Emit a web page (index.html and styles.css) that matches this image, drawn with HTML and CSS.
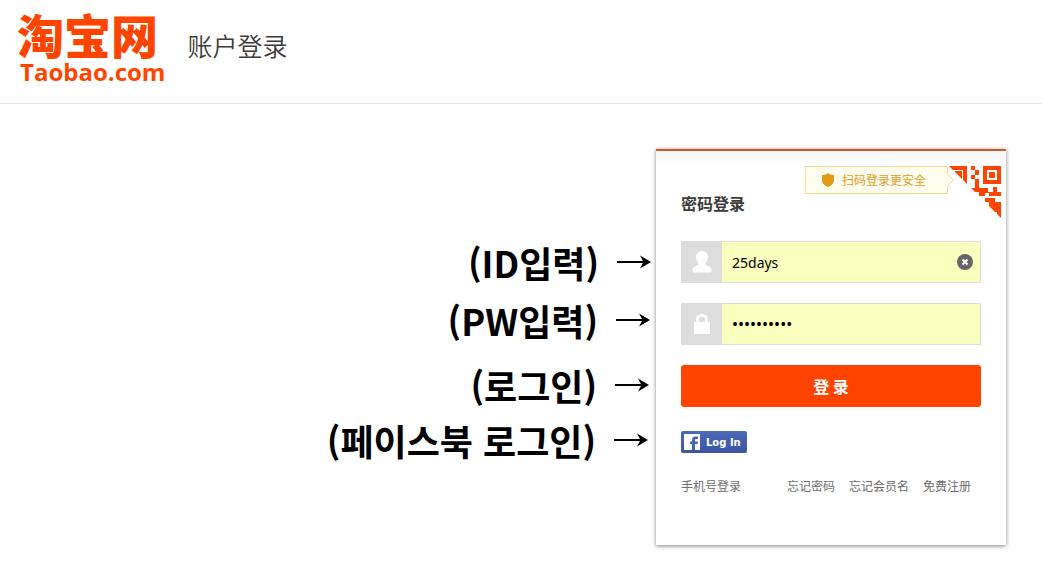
FILE: index.html
```html
<!DOCTYPE html>
<html lang="zh-CN">
<head>
<meta charset="utf-8">
<title>淘宝网 - 账户登录</title>
<link rel="stylesheet" href="styles.css">
</head>
<body>
<header class="header">
  <a class="logo" href="#">
    <span class="logo-name">淘宝网</span>
    <span class="logo-domain">Taobao.com</span>
  </a>
  <h1 class="page-title">账户登录</h1>
</header>
<main class="main">
  <ul class="notes" lang="ko">
    <li class="note note-id">(ID입력) <svg class="arrow" viewBox="0 0 34 14" aria-hidden="true"><path d="M0 6h26L23 0.500 34 7 23 13.500 26 8H0z"/></svg></li>
    <li class="note note-pw">(PW입력) <svg class="arrow" viewBox="0 0 34 14" aria-hidden="true"><path d="M0 6h26L23 0.500 34 7 23 13.500 26 8H0z"/></svg></li>
    <li class="note note-login">(로그인) <svg class="arrow" viewBox="0 0 34 14" aria-hidden="true"><path d="M0 6h26L23 0.500 34 7 23 13.500 26 8H0z"/></svg></li>
    <li class="note note-facebook">(페이스북 로그인) <svg class="arrow" viewBox="0 0 34 14" aria-hidden="true"><path d="M0 6h26L23 0.500 34 7 23 13.500 26 8H0z"/></svg></li>
  </ul>
  <form class="card">
    <a class="scan" href="#">
      <span class="scan-tip">
        <svg class="shield" viewBox="0 0 12 14" aria-hidden="true"><path d="M6 0C4.500 1.400 2.500 2 0 2v5c0 3.500 3 5.800 6 7 3-1.200 6-3.500 6-7V2C9.500 2 7.500 1.400 6 0z"/></svg>
        扫码登录更安全
        <svg class="tip-point" viewBox="0 0 7 14" aria-hidden="true"><path class="tip-fill" d="M0 0l6 7-6 7z"/><path class="tip-line" d="M0 0l6 7-6 7"/></svg>
      </span>
      <svg class="qr" viewBox="0 0 52 52" aria-hidden="true">
        <defs><clipPath id="corner"><path d="M0 0H52V52z"/></clipPath></defs>
        <g clip-path="url(#corner)" shape-rendering="crispEdges">
          <path d="M0 0h18v18h-4V4H0zM6 5h7v8H6z"/>
          <path d="M22 0h4v4h4v5h-4v4h4v5h-4v-5h-4V9h4V4h-4z"/>
          <path fill-rule="evenodd" d="M34 0h18v18H34zM38 4v10h10V4zM40 6h6v6h-6z"/>
          <path d="M26 16h4v6h9v4h5v-5h4v5h4v4H40v-3h-4v3h-6v-4h-8v-4h4z"/>
          <path d="M36 32h10v4h6v13h-3v3h3v-3h-4v-3h-8V36h-4z"/>
        </g>
      </svg>
    </a>
    <h2 class="card-title">密码登录</h2>
    <div class="field">
      <label class="field-icon" for="user" aria-label="会员名">
        <svg class="icon" viewBox="0 0 20 22" aria-hidden="true"><path d="M10 0c4 0 6 2.500 6 6 0 2.500-1 4.500-2.500 6v2c2 .8 6 1.500 6 5v1c0 1-.5 1.500-1.500 1.500H2c-1 0-1.500-.5-1.500-1.500v-1c0-3.500 4-4.200 6-5v-2C5 10.500 4 8.500 4 6c0-3.500 2-6 6-6z"/></svg>
      </label>
      <input class="input" id="user" type="text" value="25days">
      <button class="clear" type="button" aria-label="清除">
        <svg viewBox="0 0 16 16" aria-hidden="true"><circle cx="8" cy="8" r="8"/><path d="M5.500 5.500l5 5M10.500 5.500l-5 5"/></svg>
      </button>
    </div>
    <div class="field">
      <label class="field-icon" for="pass" aria-label="密码">
        <svg class="icon" viewBox="0 0 20 22" aria-hidden="true"><path fill-rule="evenodd" d="M2 9h2V7c0-4 2.500-6 6-6s6 2 6 6v2h2v12H2zM7 9h6V7c0-2-1-3.200-3-3.200S7 5 7 7z"/></svg>
      </label>
      <input class="input input-pass" id="pass" type="password" value="abcdefghij">
    </div>
    <button class="submit" type="submit">登 录</button>
    <button class="facebook" type="button">
      <svg class="fb-icon" viewBox="0 0 16 16" aria-hidden="true"><path class="fb-bg" d="M0 0h16v16H0z"/><path class="fb-f" d="M8 16v-6H6V7.500h2V6c0-2.300 1.300-3.500 3.300-3.500H14V5h-1.700C11.300 5 11 5.500 11 6.300v1.200h3l-.4 2.500H11v6z"/></svg>
      Log In
    </button>
    <nav class="links">
      <a class="link link-phone" href="#">手机号登录</a>
      <a class="link" href="#">忘记密码</a>
      <a class="link" href="#">忘记会员名</a>
      <a class="link" href="#">免费注册</a>
    </nav>
  </form>
</main>
</body>
</html>
```
FILE: styles.css
```css
* { box-sizing: border-box; }

body {
  margin: 0;
  background: #fff;
  color: #3c3c3c;
  font: 12px/18px "Noto Sans CJK SC", sans-serif;
}

a { color: inherit; text-decoration: none; }

.header {
  display: flex;
  gap: 22px;
  padding: 10px 17px 17px;
  border-bottom: 1px solid #e5e5e5;
}

.logo {
  display: flex;
  flex-direction: column;
  color: #ff4400;
  font-weight: 900;
}

.logo-name { font-size: 47px; line-height: 48px; }

.logo-domain {
  padding-left: 3px;
  font: bold 24px/28px "Open Sans", sans-serif;
}

.page-title {
  margin: 20px 0 0;
  font-size: 25px;
  font-weight: 350;
  line-height: 30px;
}

.main {
  display: flex;
  justify-content: flex-end;
  gap: 5px;
  padding: 45px 36px 36px 16px;
}

.notes {
  margin: 0;
  padding: 93px 0 0;
  list-style: none;
  color: #000;
}

.note {
  display: flex;
  align-items: center;
  justify-content: flex-end;
  gap: 18px;
  height: 40px;
  font: bold 36px/38px "Noto Sans CJK KR", sans-serif;
  white-space: nowrap;
}

.note-pw { margin: 18px 1px 0 0; }
.note-login { margin: 25px 2px 0 0; }
.note-facebook { margin: 15px 3px 0 0; }
.arrow { width: 34px; height: 14px; }

.card {
  position: relative;
  display: flex;
  flex-direction: column;
  align-items: flex-start;
  width: 350px;
  padding: 40px 25px 50px;
  border-top: 2px solid #c9562e;
  background: linear-gradient(#f9f9f9 9px, #fff 10px);
  box-shadow: 0 1px 4px rgba(0, 0, 0, 0.5);
}

.scan {
  position: absolute;
  top: 15px;
  right: 5px;
  display: flex;
  gap: 1px;
}

.scan-tip {
  position: relative;
  display: flex;
  align-items: center;
  gap: 8px;
  width: 143px;
  height: 28px;
  padding-left: 16px;
  border: 1px solid #f3d995;
  background: #fffdee;
  color: #df9c1f;
}

.shield { width: 12px; height: 14px; fill: #e39a16; }

.tip-point {
  position: absolute;
  top: 6px;
  right: -7px;
  width: 7px;
  height: 14px;
}

.tip-fill { fill: #fffdee; }
.tip-line { fill: none; stroke: #f3d995; }
.qr { width: 52px; height: 52px; fill: #ff4400; }

.card-title {
  margin: 0 0 26px;
  font-size: 16px;
  line-height: 24px;
}

.field {
  position: relative;
  display: flex;
  width: 100%;
  height: 42px;
  margin-bottom: 20px;
  border: 1px solid #ddd;
}

.field-icon {
  display: flex;
  align-items: center;
  justify-content: center;
  width: 40px;
  background: #ddd;
}

.icon { width: 20px; height: 22px; fill: #fff; }

.input {
  flex: 1;
  min-width: 0;
  padding: 0 40px 0 10px;
  border: 0;
  outline: 0;
  background: #faffbd;
  color: #000;
  font: 14px "Noto Sans", sans-serif;
}

.input-pass { font-size: 16px; }

.clear {
  position: absolute;
  top: 12px;
  right: 7px;
  width: 16px;
  height: 16px;
  padding: 0;
  border: 0;
  background: none;
}

.clear svg { display: block; fill: #666; stroke-width: 2; }
.clear path { stroke: #fff; }

.submit {
  width: 100%;
  height: 42px;
  border: 0;
  border-radius: 3px;
  background: #ff4400;
  color: #fff;
  font: bold 16px "Noto Sans CJK SC", sans-serif;
}

.facebook {
  display: flex;
  align-items: center;
  gap: 6px;
  height: 22px;
  margin: 24px 0;
  padding: 0 6px 0 3px;
  border: 0;
  border-radius: 2px;
  background: linear-gradient(#4c69ba, #3b55a0);
  color: #fff;
  font: bold 10px "DejaVu Sans", sans-serif;
}

.fb-icon { width: 16px; height: 16px; }
.fb-bg { fill: #fff; }
.fb-f { fill: #4762b0; }

.links {
  display: flex;
  gap: 14px;
  width: 100%;
  padding-right: 10px;
  color: #6c6c6c;
}

.link-phone { margin-right: auto; }
```
